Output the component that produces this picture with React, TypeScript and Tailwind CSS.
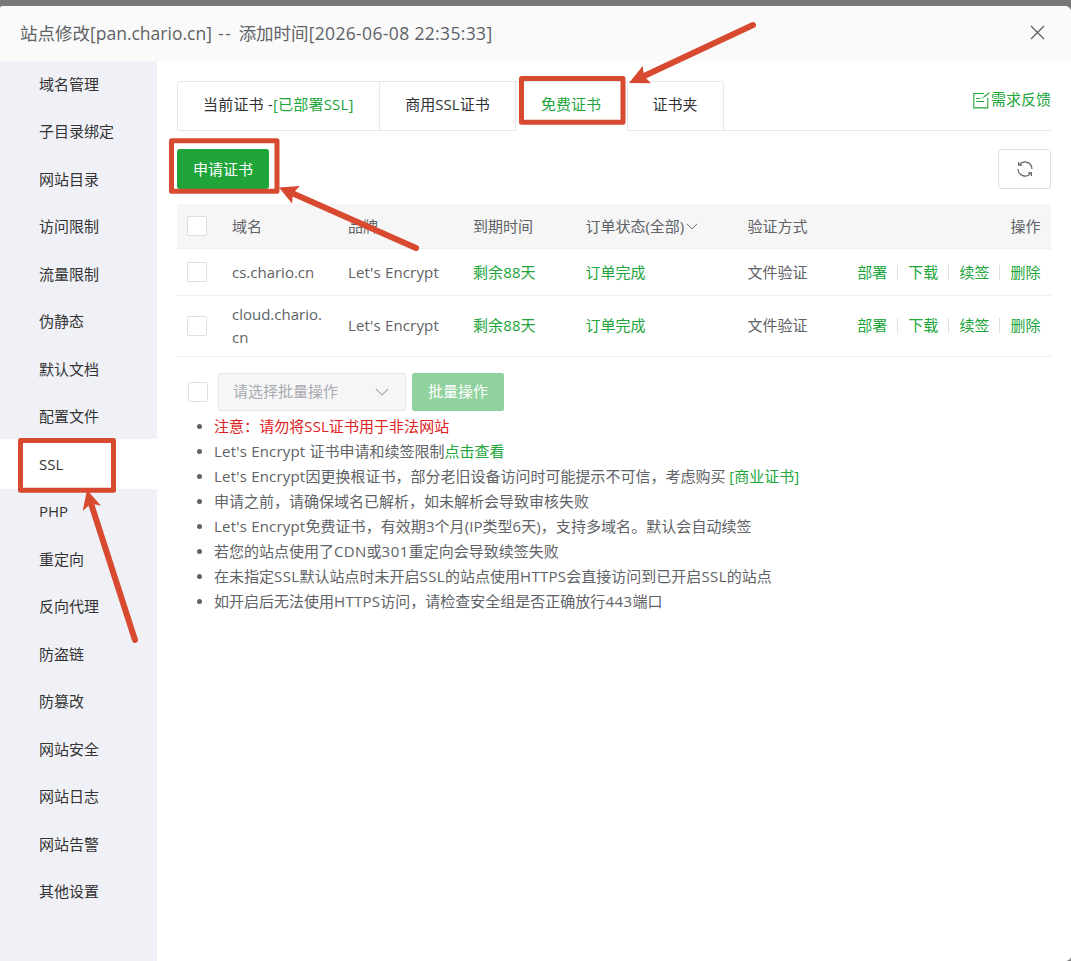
import { useState } from 'react';
import clsx from 'clsx';

const menus = [
  '域名管理',
  '子目录绑定',
  '网站目录',
  '访问限制',
  '流量限制',
  '伪静态',
  '默认文档',
  '配置文件',
  'SSL',
  'PHP',
  '重定向',
  '反向代理',
  '防盗链',
  '防篡改',
  '网站安全',
  '网站日志',
  '网站告警',
  '其他设置',
];

const certs = [
  { domain: 'cs.chario.cn', brand: "Let's Encrypt", expire: '剩余88天', status: '订单完成', verify: '文件验证', row: 'h-[47px]' },
  { domain: 'cloud.chario.cn', brand: "Let's Encrypt", expire: '剩余88天', status: '订单完成', verify: '文件验证', row: 'h-[61px] *:not-first:pb-px [&>:nth-child(2)]:pb-0' },
];

const actions = ['部署', '下载', '续签', '删除'];

const columns = 'grid grid-cols-[45px_116px_125px_112.4px_162px_1fr] items-center border-b border-[#ebeef5]';

function Checkbox({ className }: { className?: string }) {
  return <span className={clsx('block size-5 shrink-0 rounded-[2px] border border-[#dcdfe6] bg-white', className)} />;
}

function ChevronDown({ className }: { className?: string }) {
  return (
    <svg className={className} viewBox="0 0 14 8" fill="none" stroke="currentColor" strokeWidth={1.1}>
      <path d="M1 1l6 6 6-6" />
    </svg>
  );
}

function Header() {
  return (
    <div className="flex h-[55px] shrink-0 items-center justify-between bg-[#fafafa] pb-[2px] pl-5 pr-[26px]">
      <h1 className="whitespace-pre text-[17.5px] leading-6 text-[#606266]">
        站点修改[pan.chario.cn]
        <span className="tracking-[1.6px]"> -- </span>
        添加时间
        <span className="tracking-[0.35px]">[2026-06-08 22:35:33]</span>
      </h1>
      <button className="text-[#5c5e62]">
        <svg className="size-[15px]" viewBox="0 0 15 15" fill="none" stroke="currentColor" strokeWidth={1.3}>
          <path d="M1 1l13 13M14 1L1 14" />
        </svg>
      </button>
    </div>
  );
}

function Sidebar({ active, onSelect }: { active: string; onSelect: (name: string) => void }) {
  return (
    <nav className="w-[157px] shrink-0 bg-[#f0f1f6]">
      {menus.map((name) => (
        <div
          key={name}
          onClick={() => onSelect(name)}
          className={clsx(
            'flex cursor-pointer items-center pl-[39px] text-[#333]',
            name === active ? '-mt-[2px] -mb-[0.5px] h-[50px] bg-white' : 'h-[47.5px] pb-[1px]'
          )}
        >
          {name}
        </div>
      ))}
    </nav>
  );
}

function Tabs() {
  return (
    <div className="flex h-[50px] text-[#303133]">
      <div className="flex w-[203px] items-center rounded-tl-[3px] border border-[#e4e7ed] pl-[25px] pb-[4px]">
        <span className="whitespace-pre tracking-[0.2px]">当前证书 -</span>
        <span className="tracking-[0.2px] text-[#20a53a]">[已部署SSL]</span>
      </div>
      <div className="flex w-[136px] items-center justify-center border-y border-r border-[#e4e7ed] pb-[4px]">商用SSL证书</div>
      <div className="flex w-[111px] items-center justify-center border-t border-[#e4e7ed] pb-[5px] pr-px text-[#20a53a]">免费证书</div>
      <div className="flex w-[97px] items-center justify-center rounded-tr-[3px] border border-[#e4e7ed] pb-[4px] pr-px">证书夹</div>
      <div className="flex flex-1 items-start justify-end border-b border-[#e4e7ed] pt-[6px] text-[#20a53a]">
        <svg className="mr-[1px] mt-[5px] h-[17px] w-[17px]" viewBox="0 0 17 17" fill="none" stroke="currentColor" strokeWidth={1.1}>
          <path d="M11 1.5H.8v14.4h14V6" />
          <path d="M3.2 6.5h4M3.2 9.5h8M9.200 5.700L10.500 5.200M11 4.800L16.500.8" />
        </svg>
        <span className="leading-6">需求反馈</span>
      </div>
    </div>
  );
}

function CertTable() {
  return (
    <div>
      <div className={clsx(columns, 'h-[45px] bg-[#f6f6f6]')}>
        <Checkbox className="ml-[10px]" />
        <span className="pl-[10px]">域名</span>
        <span className="pl-[10px]">品牌</span>
        <span className="pl-[10px]">到期时间</span>
        <span className="flex items-center pl-[10px]">
          订单状态(全部)
          <ChevronDown className="ml-[2px] w-3" />
        </span>
        <span className="flex justify-between pl-[10px] pr-[10.6px]">
          <span>验证方式</span>
          <span>操作</span>
        </span>
      </div>
      {certs.map((cert) => (
        <div key={cert.domain} className={clsx(columns, cert.row)}>
          <Checkbox className="ml-[10px]" />
          <span className="break-all px-[10px] leading-[23px]">{cert.domain}</span>
          <span className="pl-[10px] tracking-[0.16px]">{cert.brand}</span>
          <span className="pl-[10px] tracking-[0.1px] text-[#20a53a]">{cert.expire}</span>
          <span className="pl-[10px] text-[#20a53a]">{cert.status}</span>
          <span className="flex items-center justify-between pl-[10px] pr-[10.6px]">
            <span>{cert.verify}</span>
            <span className="flex items-center text-[#20a53a]">
              {actions.map((action, i) => (
                <span key={action} className="flex items-center">
                  {i > 0 && <i className="mx-[10px] h-[15px] w-px bg-[#dcdfe6]" />}
                  {action}
                </span>
              ))}
            </span>
          </span>
        </div>
      ))}
    </div>
  );
}

function BatchBar() {
  return (
    <div className="mt-4 flex items-center pl-[11px]">
      <Checkbox />
      <div className="ml-[10px] flex h-[38px] w-[188px] items-center justify-between rounded-[2px] border border-[#e4e7ed] bg-[#f6f6f6] pl-[14px] pr-4 text-[#a8abb2]">
        <span className="pb-[2px]">请选择批量操作</span>
        <ChevronDown className="w-[14px]" />
      </div>
      <button className="ml-[6px] h-[38px] w-[92px] rounded-[2px] bg-[#90d29d] pb-[2px] text-white">批量操作</button>
    </div>
  );
}

function Notes() {
  return (
    <ul className="mt-[3px] list-none text-[#606266]">
      <Note>
        <span className="tracking-[0.06px] text-[#e02020]">注意：请勿将SSL证书用于非法网站</span>
      </Note>
      <Note>
        <span className="tracking-[0.2px]">Let's Encrypt </span>证书申请和续签限制<a className="text-[#20a53a]">点击查看</a>
      </Note>
      <Note>
        <span className="tracking-[0.2px]">Let's Encrypt</span>因更换根证书，部分老旧设备访问时可能提示不可信，考虑购买 <a className="text-[#20a53a]">[商业证书]</a>
      </Note>
      <Note>申请之前，请确保域名已解析，如未解析会导致审核失败</Note>
      <Note>
        <span className="tracking-[0.2px]">Let's Encrypt</span>
        <span className="tracking-[0.06px]">免费证书，有效期3个月(IP类型6天)，支持多域名。默认会自动续签</span>
      </Note>
      <Note>
        若您的站点使用了<span className="tracking-[0.3px]">CDN</span>或<span className="tracking-[0.5px]">301</span>重定向会导致续签失败
      </Note>
      <Note>
        在未指定<span className="tracking-[0.4px]">SSL</span>默认站点时未开启<span className="tracking-[0.4px]">SSL</span>的站点使用
        <span className="tracking-[0.3px]">HTTPS</span>会直接访问到已开启<span className="tracking-[0.4px]">SSL</span>的站点
      </Note>
      <Note>
        如开启后无法使用<span className="tracking-[0.3px]">HTTPS</span>访问，请检查安全组是否正确放行<span className="tracking-[0.5px]">443</span>端口
      </Note>
    </ul>
  );
}

function Note({ children }: { children: React.ReactNode }) {
  return (
    <li className="flex h-[25px] items-center pl-5">
      <i className="mr-3 size-[5px] rounded-full bg-[#606266]" />
      <span className="whitespace-pre leading-[25px]">{children}</span>
    </li>
  );
}

// Red boxes and arrows that point out the steps
function Guides() {
  return (
    <svg className="pointer-events-none absolute left-0 top-0" width={1071} height={961} viewBox="0 0 1071 961">
      <g fill="none" stroke="#d84a2f" strokeWidth={5} strokeLinejoin="round">
        <rect x="171.5" y="140.8" width="105.5" height="50.5" />
        <rect x="521.5" y="78.5" width="101.5" height="43.7" />
        <rect x="20.5" y="440.5" width="93" height="49.7" />
      </g>
      <g stroke="#d84a2f" strokeWidth={6} strokeLinecap="round">
        <path d="M753 25L643 76.5" />
        <path d="M416 248L293 193.5" />
        <path d="M135 640L91.5 505" />
      </g>
      <g fill="#d84a2f">
        <path d="M629 83l13.7-17 1.3 10 7 7.3z" />
        <path d="M279 187.5l21-1.5-7 7-1 10.5z" />
        <path d="M87 490l14 15.7-10-2.2-8.3 7.5z" />
      </g>
    </svg>
  );
}

export default function App() {
  const [active, setActive] = useState('SSL');

  return (
    <div className="relative flex h-[961px] w-[1071px] flex-col overflow-hidden bg-[#777978] pt-[6px] font-['Open_Sans','Noto_Sans_CJK_SC',sans-serif] text-[15px] leading-[23px] text-[#606266]">
      <div className="flex flex-1 flex-col overflow-hidden rounded-tl-[3px] rounded-tr-[6px] rounded-br-[5px] bg-white">
        <Header />
        <div className="flex flex-1">
          <Sidebar active={active} onSelect={setActive} />
          <main className="flex-1 px-5 pt-5">
            <Tabs />
            <div className="mb-[15px] mt-[18px] flex justify-between">
              <button className="h-10 w-[92px] rounded-[3px] bg-[#20a53a] text-white">申请证书</button>
              <button className="flex h-10 w-[53px] items-center justify-center rounded-[3px] border border-[#dcdfe6]">
                <svg className="size-4" viewBox="0 0 16 16" fill="none" stroke="currentColor" strokeWidth={1.2}>
                  <path d="M2.5 3.700A7 7 0 0 1 15 8M1 8a7 7 0 0 0 12.500 4.300" />
                  <path d="M1.600.9v3.300h3.500M14.400 15.100v-3.300h-3.500" />
                </svg>
              </button>
            </div>
            <CertTable />
            <BatchBar />
            <Notes />
          </main>
        </div>
      </div>
      <Guides />
    </div>
  );
}
